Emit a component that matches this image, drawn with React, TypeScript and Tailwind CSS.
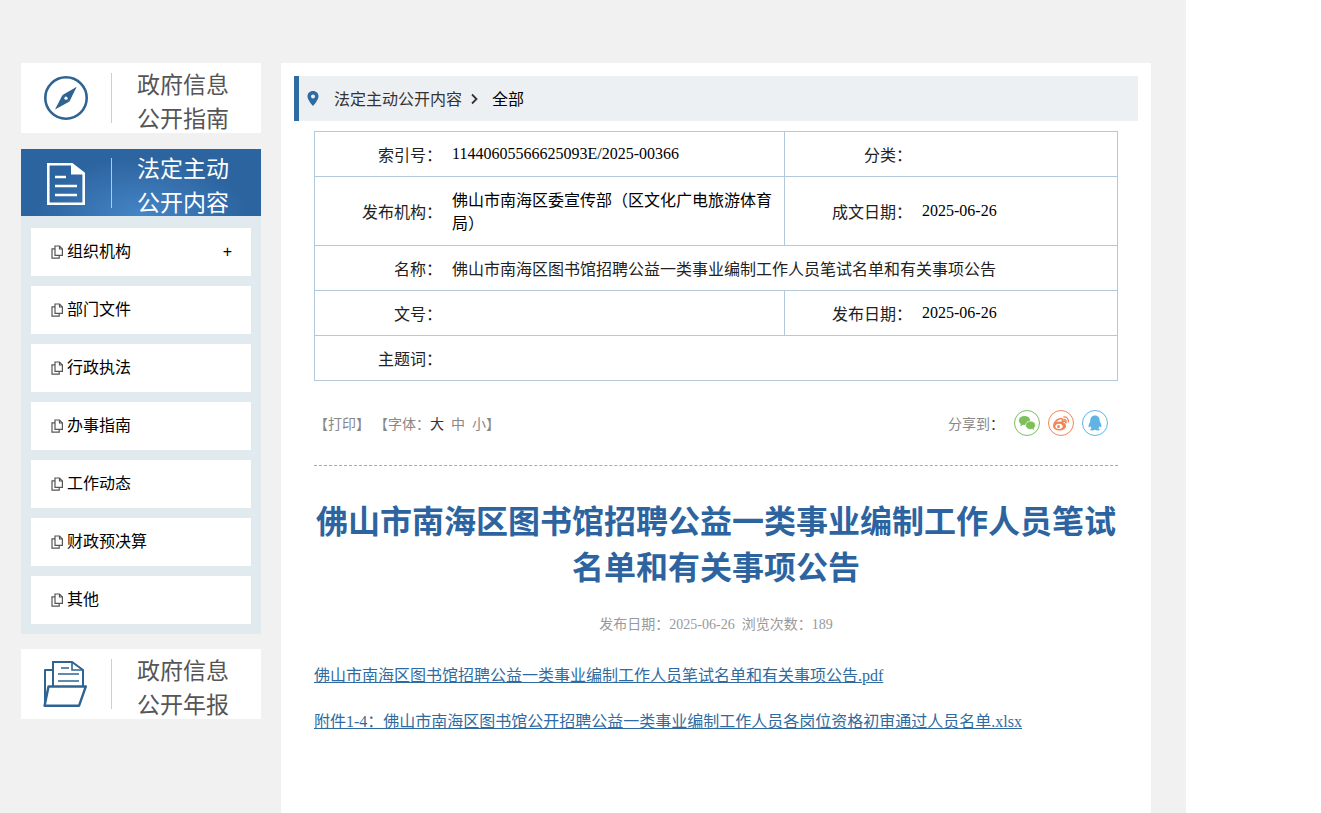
function Compass() {
  return (
    <svg width="46" height="46" viewBox="0 0 46 46" fill="none">
      <circle cx="23" cy="23" r="20.7" stroke="#2f6492" strokeWidth="2.6" />
      <path d="M33.5 12 L26.5 26.5 L19.5 20 Z" fill="#2f6492" />
      <path d="M12 34.5 L19.5 20 L26.5 26.5 Z" fill="#2f6492" />
      <path d="M33.5 12 L20.5 21 L25.5 25.5 Z" fill="#2f6492" />
      <circle cx="23" cy="23.2" r="1.6" fill="#fff" />
    </svg>
  );
}
function Doc() {
  return (
    <svg width="38" height="42" viewBox="0 0 38 42" fill="none" stroke="#fff" strokeWidth="2.6">
      <path d="M1.3 1.3H25L36.7 10.5V40.7H1.3Z" />
      <path d="M25 1.3V10.5H36.7" fill="#fff" strokeWidth="2" />
      <path d="M8 14H19M8 23H30M8 32H30" />
    </svg>
  );
}
function Folder() {
  return (
    <svg width="44" height="46" viewBox="0 0 44 46" fill="none" stroke="#2f6492" strokeWidth="2" className="-ml-[2px]">
      <path d="M10 25V1H29L40 9V25" />
      <path d="M29 1V9H40" strokeWidth="1.6" />
      <path d="M18 7H26M15 13H36M15 20H36" strokeWidth="1.6" />
      <path d="M10 9H2V44" strokeWidth="2" strokeLinejoin="round" />
      <path d="M5.5 25.5H42.8L36 44.8H1.6Z" strokeWidth="2.4" strokeLinejoin="round" />
    </svg>
  );
}
function Page() {
  return (
    <svg width="12" height="14" viewBox="0 0 12 14" fill="none" stroke="#555" strokeWidth="1.2">
      <path d="M4 1H8.5L11.4 4V10.4H4Z" />
      <path d="M8.5 1V4H11.4" />
      <path d="M4 3.8H1V13.2H8.2V10.4" />
    </svg>
  );
}
function SideCard({ icon, a, b, active }: { icon: React.ReactNode; a: string; b: string; active?: boolean }) {
  return (
    <div
      className={
        active
          ? "flex h-[67px] items-start overflow-hidden bg-[radial-gradient(ellipse_at_50%_100%,#4585c6_0%,#2c649f_62%)] text-white"
          : "flex h-[70px] items-start overflow-hidden bg-white text-[#555]"
      }
    >
      <div className={active ? "flex h-[69px] w-[90px] items-center justify-center" : "flex h-[70px] w-[90px] items-center justify-center"}>{icon}</div>
      <div className={active ? "mt-[9px] h-[50px] w-px bg-[#b5c9de]" : "mt-[10px] h-[50px] w-px bg-[#cfcfcf]"} />
      <div className={active ? "ml-[25px] mt-[4px] text-[23px] leading-[34px]" : "ml-[25px] mt-[4px] text-[23px] leading-[34px] pt-[2px]"}>
        {a}
        <br />
        {b}
      </div>
    </div>
  );
}
const items = ["组织机构", "部门文件", "行政执法", "办事指南", "工作动态", "财政预决算", "其他"];
function Row({ h, children, last }: { h: string; children: React.ReactNode; last?: boolean }) {
  return <div className={`flex ${h} ${last ? "" : "border-b border-[#b3c9da]"}`}>{children}</div>;
}
function Label({ children, w }: { children: string; w: string }) {
  return <div className={`${w} shrink-0 self-center pr-[2px] pt-[4px] text-right text-[16px] leading-[24px] text-[#222]`}>{children}</div>;
}
function Val({ children }: { children?: string }) {
  return <div className="flex-1 self-center pl-[8px] pr-[2px] pt-[3px] text-[16px] leading-[23px] text-[#222]">{children}</div>;
}
function Wechat() {
  return (
    <svg width="26" height="26" viewBox="0 0 26 26">
      <circle cx="13" cy="13" r="12.5" fill="#fff" stroke="#7cbf5b" />
      <ellipse cx="10.5" cy="10.5" rx="5.6" ry="4.6" fill="#7cbf5b" />
      <path d="M7 13.5L6.2 16.5L9.5 14.5Z" fill="#7cbf5b" />
      <ellipse cx="16.5" cy="15.3" rx="5" ry="4.2" fill="#7cbf5b" stroke="#fff" strokeWidth="0.7" />
      <path d="M18.5 18.5L20 20.5L19.7 17.5Z" fill="#7cbf5b" />
    </svg>
  );
}
function Weibo() {
  return (
    <svg width="26" height="26" viewBox="0 0 26 26" fill="none">
      <circle cx="13" cy="13" r="12.5" fill="#fff" stroke="#f08558" />
      <ellipse cx="11.5" cy="16" rx="6.6" ry="4.6" fill="#f08558" />
      <path d="M6 14.5C7 11 10.5 8.5 13 8.5C14.5 8.5 14.8 10 14.3 11.5C16.5 10.7 18.3 11.2 17.8 13.5" stroke="#f08558" strokeWidth="1.6" />
      <ellipse cx="11" cy="16.3" rx="3.6" ry="2.6" fill="#fff" />
      <circle cx="10.5" cy="16.5" r="1.5" fill="#f08558" />
      <path d="M15.5 7C18.5 6.4 21 9 20.3 12M15.8 9.4C17.3 9 18.5 10.3 18.1 11.8" stroke="#f08558" strokeWidth="1.2" strokeLinecap="round" />
    </svg>
  );
}
function QQ() {
  return (
    <svg width="26" height="26" viewBox="0 0 26 26">
      <circle cx="13" cy="13" r="12.5" fill="#fff" stroke="#5fb3e6" />
      <path d="M13 5.5C9.8 5.5 8.3 8 8.3 10.5C8.3 11.5 8 12 7.5 13C6.6 14.7 6.2 16.7 6.9 17.2C7.4 17.5 8 16.7 8.4 16C8.6 17 9 17.8 9.6 18.4C8.6 18.8 8 19.3 8.3 20C8.7 20.7 11.5 20.6 13 19.8C14.5 20.6 17.3 20.7 17.7 20C18 19.3 17.4 18.8 16.4 18.4C17 17.8 17.4 17 17.6 16C18 16.7 18.6 17.5 19.1 17.2C19.8 16.7 19.4 14.7 18.5 13C18 12 17.7 11.5 17.7 10.5C17.7 8 16.2 5.5 13 5.5Z" fill="#5fb3e6" />
    </svg>
  );
}
export default function App() {
  return (
    <div className="h-[813px] overflow-hidden bg-white font-['Liberation_Serif','Noto_Sans_CJK_SC',serif]">
      <div className="flex h-full w-[1186px] items-start gap-[20px] bg-[#f1f1f1] pl-[21px] pt-[63px]">
        <aside className="w-[240px] shrink-0">
          <SideCard icon={<Compass />} a="政府信息" b="公开指南" />
          <div className="mt-[16px]">
            <SideCard active icon={<Doc />} a="法定主动" b="公开内容" />
            <div className="flex h-[418px] flex-col gap-[10px] bg-[#e1ebef] px-[10px] pt-[12px]">
              {items.map((t, i) => (
                <div key={t} className="flex h-[48px] items-center bg-white pl-[20px] pr-[19px] text-[16px] text-black">
                  <Page />
                  <span className="ml-[4px] flex-1">{t}</span>
                  {i === 0 && <span className="font-['Liberation_Sans'] text-[16px]">+</span>}
                </div>
              ))}
            </div>
          </div>
          <div className="mt-[15px]">
            <SideCard icon={<Folder />} a="政府信息" b="公开年报" />
          </div>
        </aside>
        <main className="h-[750px] w-[870px] shrink-0 bg-white px-[13px] pt-[13px]">
          <div className="flex h-[45px] items-center border-l-[5px] border-[#2f6ba0] bg-[#edf0f2] text-[16px]">
            <svg className="ml-[8px]" width="12" height="15" viewBox="0 0 12 15">
              <path fillRule="evenodd" d="M6 0C2.7 0 .5 2.4.5 5.4C.5 9 6 15 6 15S11.5 9 11.5 5.4C11.5 2.4 9.3 0 6 0ZM6 3.5A2 2 0 1 1 6 7.5A2 2 0 1 1 6 3.5Z" fill="#2f6ba0" />
            </svg>
            <span className="ml-[15px] pt-[2px] text-[#333]">法定主动公开内容</span>
            <svg className="ml-[8px]" width="9" height="12" viewBox="0 0 9 12" fill="none" stroke="#333" strokeWidth="1.8">
              <path d="M2 1.5L6.5 6L2 10.5" />
            </svg>
            <span className="ml-[13px] pt-[2px] text-black">全部</span>
          </div>
          <div className="mx-[20px] mt-[10px]">
            <div className="border border-[#b3c9da]">
              <Row h="h-[45px]">
                <Label w="w-[129px]">索引号：</Label>
                <div className="flex w-[340px] items-center pb-[1px] pl-[8px] text-[16px]">11440605566625093E/2025-00366</div>
                <div className="flex flex-1 border-l border-[#b3c9da]"><Label w="w-[129px]">分类：</Label></div>
              </Row>
              <Row h="h-[69px]">
                <Label w="w-[129px]">发布机构：</Label>
                <div className="flex w-[340px] items-center pl-[8px] pr-[2px] pt-[2px] text-[16px] leading-[23px]">佛山市南海区委宣传部（区文化广电旅游体育局）</div>
                <div className="flex flex-1 border-l border-[#b3c9da]">
                  <Label w="w-[129px]">成文日期：</Label>
                  <div className="self-center pl-[8px] text-[16px]">2025-06-26</div>
                </div>
              </Row>
              <Row h="h-[45px]">
                <Label w="w-[129px]">名称：</Label>
                <Val>佛山市南海区图书馆招聘公益一类事业编制工作人员笔试名单和有关事项公告</Val>
              </Row>
              <Row h="h-[45px]">
                <Label w="w-[129px]">文号：</Label>
                <div className="w-[340px]" />
                <div className="flex flex-1 border-l border-[#b3c9da]">
                  <Label w="w-[129px]">发布日期：</Label>
                  <div className="self-center pl-[8px] text-[16px]">2025-06-26</div>
                </div>
              </Row>
              <Row h="h-[44px]" last>
                <Label w="w-[129px]">主题词：</Label>
              </Row>
            </div>
            <div className="flex h-[85px] items-center border-b border-dashed border-[#aaa] pr-[10px] text-[14px] text-[#888]">
              <div className="flex flex-1 pt-[2px]">
                <span>【打印】</span>
                <span className="ml-[4px]">【字体：</span>
                <span className="text-[#333]">大</span>
                <span className="ml-[7px]">中</span>
                <span className="ml-[7px]">小】</span>
                <span className="ml-auto">分享到</span>
                <span className="text-[#333]">：</span>
              </div>
              <div className="ml-[10px] flex gap-[8px]">
                <Wechat />
                <Weibo />
                <QQ />
              </div>
            </div>
            <h1 className="mt-[33px] text-center font-['Liberation_Sans','Noto_Sans_CJK_SC',sans-serif] text-[32px] font-bold leading-[46px] text-[#2d64a0]">
              佛山市南海区图书馆招聘公益一类事业编制工作人员笔试名单和有关事项公告
            </h1>
            <p className="mt-[24px] text-center text-[14px] leading-[20px] text-[#999]">发布日期：2025-06-26&nbsp;&nbsp;浏览次数：189</p>
            <div className="mt-[29px] text-[16px] leading-[24px] text-[#2f6ba0] underline">
              <p>佛山市南海区图书馆招聘公益一类事业编制工作人员笔试名单和有关事项公告.pdf</p>
              <p className="mt-[22px]">附件1-4：佛山市南海区图书馆公开招聘公益一类事业编制工作人员各岗位资格初审通过人员名单.xlsx</p>
            </div>
          </div>
        </main>
      </div>
    </div>
  );
}
